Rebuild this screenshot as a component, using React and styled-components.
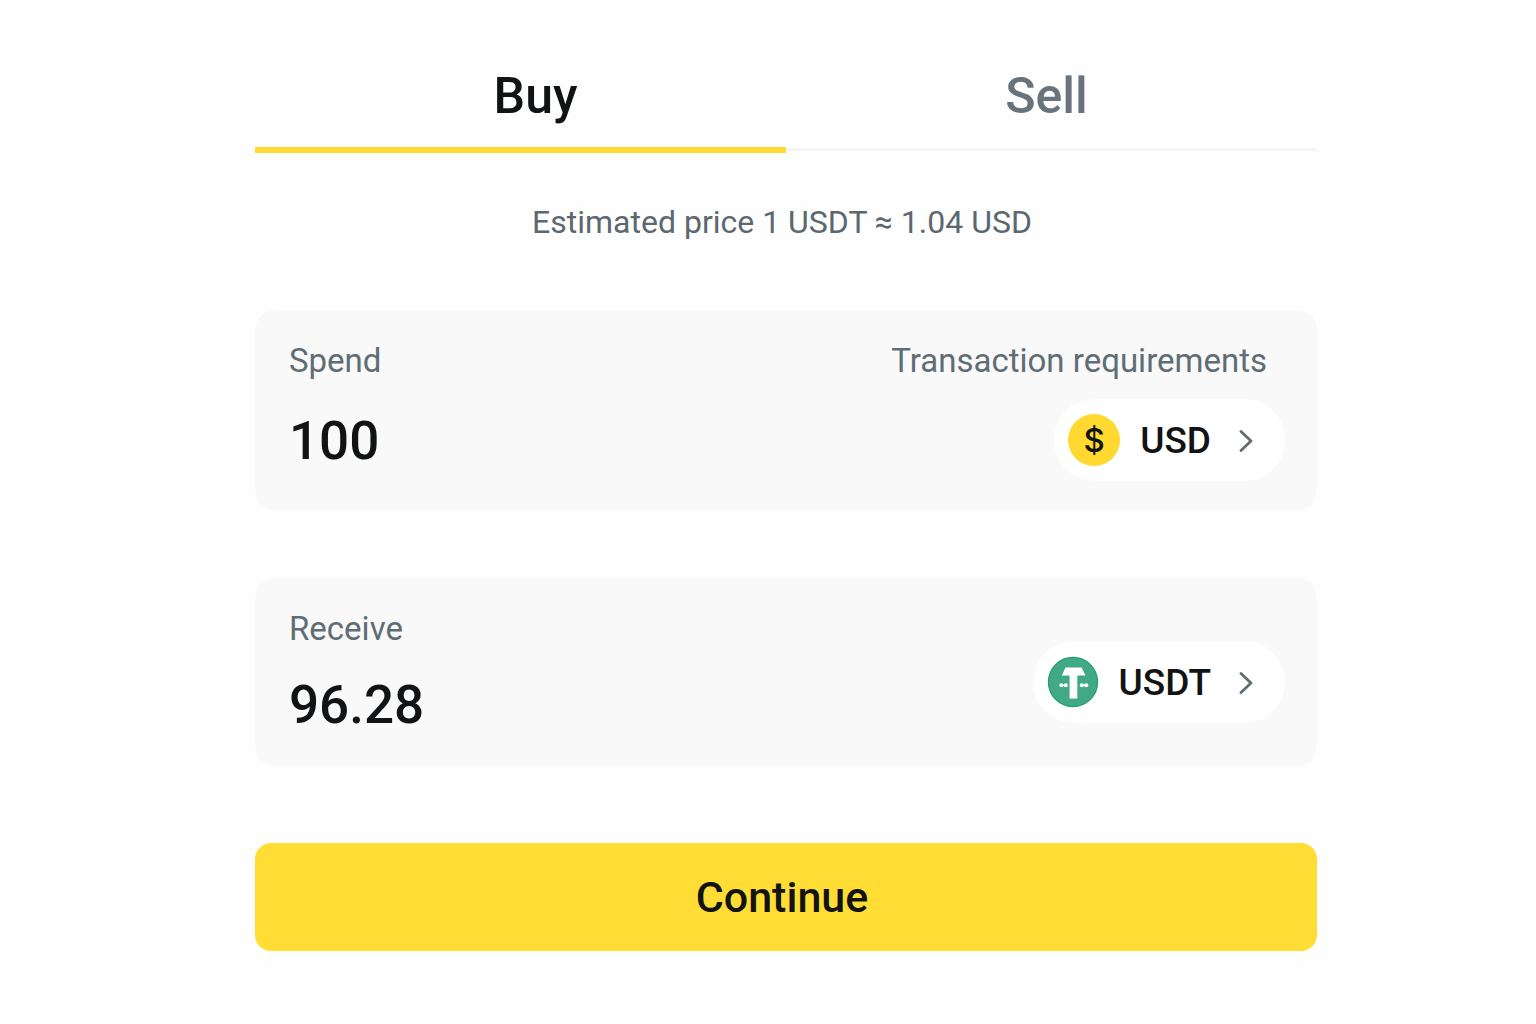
import React, { useState } from "react";
import styled, { createGlobalStyle } from "styled-components";

const GlobalStyle = createGlobalStyle`
  *, *::before, *::after { box-sizing: border-box; }
  body {
    margin: 0;
    background: #fefefe;
    color: #111314;
    font-family: Roboto, "Liberation Sans", sans-serif;
  }
  button, input { font: inherit; color: inherit; }
`;

const Page = styled.main`
  padding: 48px 219px 72px 255px;

  @media (max-width: 1100px) {
    padding: 32px 24px;
  }
`;

const Tabs = styled.div`
  display: grid;
  grid-template-columns: 1fr 1fr;
`;

const Tab = styled.button`
  display: flex;
  flex-direction: column;
  padding: 0;
  border: 0;
  background: none;
  cursor: pointer;
  font-size: 50px;
  font-weight: 500;
  line-height: 97px;
  color: ${(p) => (p.$active ? "#111314" : "#69737d")};

  &::after {
    content: "";
    width: 100%;
    height: ${(p) => (p.$active ? "6px" : "3px")};
    margin-top: ${(p) => (p.$active ? "2px" : "3px")};
    background: ${(p) => (p.$active ? "#ffd92f" : "#f5f5f5")};
  }
`;

const TabLabel = styled.span`
  width: 100%;
  text-align: center;

  ${Tab}:first-child & { padding-left: 30px; }
  ${Tab}:last-child & { padding-right: 10px; }
`;

const Price = styled.p`
  margin: 49px 0 68px;
  padding-right: 8px;
  text-align: center;
  font-size: 32px;
  line-height: 40px;
  color: #5b686f;
`;

const Card = styled.section`
  display: flex;
  justify-content: space-between;
  gap: 24px;
  min-height: 188px;
  padding: 31px 32px 29px 34px;
  border-radius: 20px;
  background: #f9f9f9;

  & + & { margin-top: 68px; }
`;

const Field = styled.div`
  display: flex;
  flex: 1;
  flex-direction: column;
  gap: ${(p) => p.$gap}px;
  min-width: 0;
`;

const Label = styled.label`
  font-size: 33px;
  line-height: 40px;
  color: #5f6d75;
`;

const Amount = styled.input`
  width: 100%;
  height: 60px;
  padding: 0;
  border: 0;
  outline: 0;
  background: none;
  font-size: 53px;
  font-weight: 500;
`;

const Side = styled.div`
  display: flex;
  flex-direction: column;
  align-items: flex-end;
  justify-content: center;
  gap: 18px;
  padding-top: ${(p) => p.$top}px;
`;

const Requirements = styled.a`
  padding-right: 18px;
  font-size: 33px;
  line-height: 40px;
  color: #5f6d75;
  text-decoration: none;
`;

const Currency = styled.button`
  display: flex;
  align-items: center;
  height: 82px;
  padding: 0 32px 0 14px;
  border: 0;
  border-radius: 41px;
  background: #ffffff;
  cursor: pointer;
  font-size: 37px;
  font-weight: 500;
`;

const Code = styled.span`
  margin: 0 28px 0 20px;
`;

const DollarBadge = styled.span`
  display: grid;
  place-items: center;
  width: 52px;
  height: 52px;
  border-radius: 50%;
  background: #ffd92f;
  font-family: Inter, "Liberation Sans", sans-serif;
  font-size: 33px;
  font-weight: 500;
`;

const Submit = styled.button`
  display: block;
  width: 100%;
  height: 108px;
  margin-top: 77px;
  padding: 0 8px 0 0;
  border: 0;
  border-radius: 16px;
  background: #ffdd35;
  cursor: pointer;
  font-size: 43px;
  font-weight: 500;
`;

const Chevron = () => (
  <svg width="14" height="24" viewBox="0 0 14 24" fill="none" aria-hidden="true">
    <path d="M2 3.5L12 13L2 22.5" stroke="#5f6d75" strokeWidth="2.8" strokeLinecap="round" strokeLinejoin="round" />
  </svg>
);

const Tether = () => (
  <svg width="52" height="52" viewBox="0 0 52 52" aria-hidden="true">
    <circle cx="26" cy="26" r="24.6" fill="#42a985" stroke="#1f9f78" strokeWidth="1.2" />
    <path d="M18.5 11.5H34.5L38.5 19.5H30.3V42.5H22.6V19.5H14.8Z" fill="#fff" />
    <g fill="#fff">
      <circle cx="14.4" cy="29.3" r="2" />
      <circle cx="18.8" cy="29.3" r="2" />
      <rect x="14.4" y="28.6" width="4.4" height="1.5" />
      <circle cx="34.8" cy="29.3" r="2" />
      <circle cx="39.2" cy="29.3" r="2" />
      <rect x="34.8" y="28.6" width="4.4" height="1.5" />
    </g>
  </svg>
);

export default function App() {
  const [tab, setTab] = useState("Buy");
  const [spend, setSpend] = useState("100");
  const [receive, setReceive] = useState("96.28");

  return (
    <Page>
      <GlobalStyle />
      <Tabs role="tablist">
        {["Buy", "Sell"].map((name) => (
          <Tab
            key={name}
            type="button"
            role="tab"
            aria-selected={tab === name}
            $active={tab === name}
            onClick={() => setTab(name)}
          >
            <TabLabel>{name}</TabLabel>
          </Tab>
        ))}
      </Tabs>
      <Price>Estimated price 1 USDT ≈ 1.04 USD</Price>
      <Card>
        <Field $gap={30}>
          <Label htmlFor="spend">Spend</Label>
          <Amount id="spend" inputMode="decimal" value={spend} onChange={(e) => setSpend(e.target.value)} />
        </Field>
        <Side $top={0}>
          <Requirements href="#requirements">Transaction requirements</Requirements>
          <Currency type="button">
            <DollarBadge>$</DollarBadge>
            <Code>USD</Code>
            <Chevron />
          </Currency>
        </Side>
      </Card>
      <Card>
        <Field $gap={26}>
          <Label htmlFor="receive">Receive</Label>
          <Amount id="receive" inputMode="decimal" value={receive} onChange={(e) => setReceive(e.target.value)} />
        </Field>
        <Side $top={18}>
          <Currency type="button">
            <Tether />
            <Code>USDT</Code>
            <Chevron />
          </Currency>
        </Side>
      </Card>
      <Submit type="button">Continue</Submit>
    </Page>
  );
}
